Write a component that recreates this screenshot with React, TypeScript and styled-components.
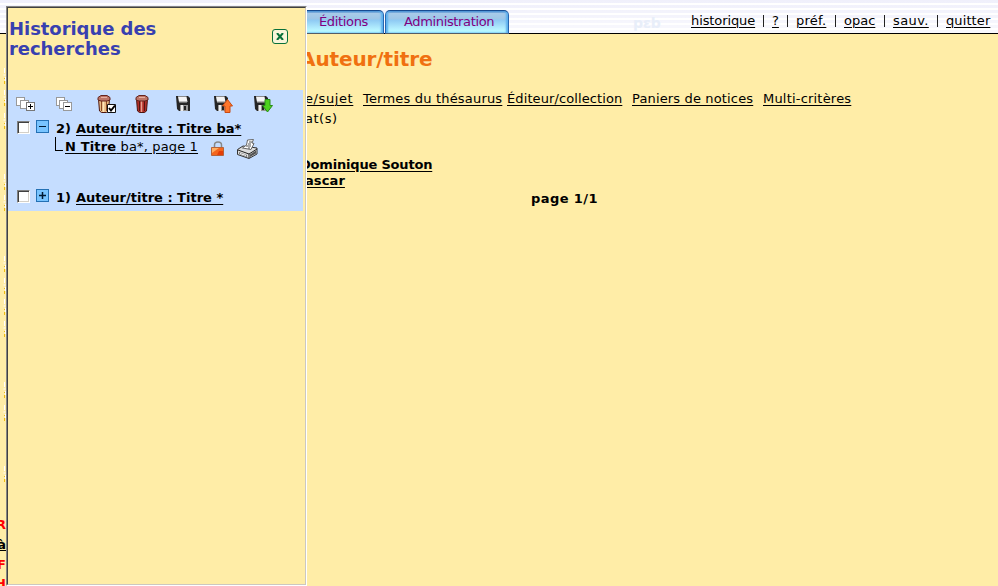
import React from "react";
import styled, { createGlobalStyle } from "styled-components";

const GlobalStyle = createGlobalStyle`
  html, body { margin: 0; height: 586px; overflow: hidden; }
  body { background: #ffeda7; color: #000; font: 13px/16px "DejaVu Sans", Verdana, sans-serif; }
`;

const Page = styled.div`
  position: relative;
  width: 998px;
  height: 586px;
  overflow: hidden;
`;
const Header = styled.header`
  box-sizing: border-box;
  display: flex;
  align-items: flex-end;
  height: 34px;
  padding-left: 290px;
  border-bottom: 1px solid #000;
  background: linear-gradient(#ffffff20, #ffffffa0), repeating-linear-gradient(#eeeefb 0 3px, #fff 3px 5px);
`;
const Tab = styled.div<{ $w: number; $pad: number }>`
  box-sizing: border-box;
  width: ${(p) => p.$w}px;
  height: 24px;
  margin-right: 1px;
  margin-bottom: -1px;
  padding: 3px 0 0 ${(p) => p.$pad}px;
  color: #800080;
  letter-spacing: -0.35px;
  white-space: nowrap;
  border: 1px solid #2766b0;
  border-top: 1px solid #174b91;
  border-bottom: 1px solid #555d66;
  border-radius: 5px 5px 0 0;
  background: linear-gradient(#4f86c4 0 1px, #a9cbe9 2px, #9dc6e7 8px, #8ec9f3 9px, #b5f1ff 18px, #baffff 22px);
  box-shadow: inset 2px 0 2px #5cb0ee, inset -2px 0 2px #5cb0ee;
`;
const Mark = styled.span<{ $ml: number }>`
  width: 28px;
  margin-left: ${(p) => p.$ml}px;
  font: bold 14px/20px "DejaVu Sans", sans-serif;
  color: #e8eef9;
`;
const UserLinks = styled.nav`
  display: flex;
  align-self: flex-start;
  padding-top: 13px;
  margin-left: 30px;
`;
const Fit = styled.span<{ $w: number; $ls?: number; $ml?: number; $line?: boolean; $bold?: boolean }>`
  display: block;
  flex: none;
  width: ${(p) => p.$w}px;
  margin-left: ${(p) => p.$ml ?? 0}px;
  letter-spacing: ${(p) => p.$ls ?? 0}px;
  white-space: nowrap;
  font-weight: ${(p) => (p.$bold ? "bold" : "normal")};
  text-decoration: ${(p) => (p.$line ? "underline" : "none")};
  text-underline-offset: 2px;
  text-decoration-thickness: 1px;
`;
const Pipe = styled.i`
  width: 1px;
  height: 12px;
  margin: 2px 8px 0;
  background: #222;
`;
const Results = styled.main`
  padding: 13px 0 0 300px;
`;
const Title = styled.h1`
  margin: 0;
  font: bold 20px/24px "DejaVu Sans", sans-serif;
  letter-spacing: -0.1px;
  color: #f07010;
`;
const Row = styled.div<{ $mt?: number; $pl?: number }>`
  display: flex;
  height: 16px;
  margin-top: ${(p) => p.$mt ?? 0}px;
  padding-left: ${(p) => p.$pl ?? 0}px;
`;
const Backdrop = styled.div`
  position: absolute;
  left: -6px;
  top: 517px;
  width: 12px;
  text-align: right;
`;
const Flecks = styled.svg`
  position: absolute;
  left: 2px;
  top: 60px;
`;
const Clip = styled.div<{ $c: string; $h: number; $line?: boolean }>`
  height: ${(p) => p.$h}px;
  font-weight: bold;
  color: ${(p) => p.$c};
  text-decoration: ${(p) => (p.$line ? "underline" : "none")};
`;
const Panel = styled.aside`
  position: absolute;
  box-sizing: border-box;
  left: 6px;
  top: 6px;
  width: 301px;
  height: 580px;
  border: 1px solid;
  border-color: #858585 #fff #fff #858585;
`;
const PanelBody = styled.div`
  box-sizing: border-box;
  height: 578px;
  border: 1px solid;
  border-color: #404040 #ccc8c0 #ccc8c0 #404040;
  background: #ffeda7;
`;
const PanelHead = styled.div`
  display: flex;
  justify-content: space-between;
  height: 71px;
  padding: 11px 17px 0 1px;
`;
const PanelTitle = styled.h2`
  width: 190px;
  margin: 0;
  font: bold 18px/20px "DejaVu Sans", sans-serif;
  letter-spacing: -0.05px;
  color: #3840b0;
`;
const Close = styled.button`
  display: flex;
  box-sizing: border-box;
  width: 16px;
  height: 15px;
  margin-top: 10px;
  padding: 3px;
  border: 1px solid #087038;
  border-radius: 3px;
  background: #f8f5d8;
`;
const History = styled.section`
  width: 295px;
  height: 121px;
  margin-top: 0;
  background: #c5ddff;
`;
const Tools = styled.div`
  display: flex;
  height: 30px;
`;
const Tool = styled.span<{ $ml: number; $mt?: number }>`
  flex: none;
  width: 22px;
  height: 22px;
  margin: ${(p) => p.$mt ?? 4}px 0 0 ${(p) => p.$ml}px;
  svg { display: block; }
`;
const Box = styled.span`
  box-sizing: border-box;
  width: 13px;
  height: 13px;
  margin: 1px 6px 0 9px;
  border: 1px solid;
  border-color: #808080 #fff #fff #808080;
  background: #fff;
  box-shadow: inset 1px 1px #404040, inset -1px -1px #d4d0c8;
`;
const Toggle = styled.span`
  box-sizing: border-box;
  width: 13px;
  height: 13px;
  margin-right: 7px;
  border: 1px solid #2471b5;
  background: #78c4ff;
  svg { display: block; }
`;
const Branch = styled.i`
  box-sizing: border-box;
  width: 8px;
  height: 14px;
  margin: -1px 0 0 47px;
  border: solid #000;
  border-width: 0 0 1px 1px;
`;
const Entry = styled(Row)`
  ${Fit} { margin-top: 1px; }
`;

const Sign = ({ plus }: { plus?: boolean }) => (
  <Toggle><svg width="11" height="11"><path d={plus ? "M2 5.5h7M5.5 2v7" : "M2 5.5h7"} stroke="#001a33" strokeWidth={plus ? 1.5 : 1} /></svg></Toggle>
);
const Stack = ({ plus }: { plus?: boolean }) => (
  <svg width="22" height="22" fill="#fff" stroke="#999" shapeRendering="crispEdges">
    <path d="M.5 3.500h8v8h-8z" />
    <path d={plus ? "M4.500 6.500h8v8h-8z" : "M3.500 6.500h8v8h-8z"} />
    {plus
      ? <path d="M10.5 8.500h8v8h-8z" stroke="#777" />
      : <path d="M7.500 8.500h8v8h-8z" />}
    <path d={plus ? "M12 12.500h5M14.500 10v5" : "M9 12.500h5"} stroke="#000" />
  </svg>
);
const Bin = ({ check }: { check?: boolean }) => (
  <svg width="22" height="22">
    <path d="M1.500 5h11l-1 12-2 1.500h-5L2.500 17z" fill={check ? "#e7b983" : "#b02e28"} stroke="#4c150f" />
    <path d="M4.500 7v10M9.500 7v10" stroke={check ? "#8d4a25" : "#551411"} />
    <path d="M6.500 7v11" stroke={check ? "#ffe4b8" : "#e9a08f"} strokeWidth="1.500" />
    <path d="M1 3.500l3-2h6l3 2V6l-3 1H4L1 6z" fill="#bd7568" stroke="#66251e" />
    <path d="M4 3.500h6" stroke="#e6aea0" />
    {check && <g><path d="M10.500 10.500h8v8h-8z" fill="#fff" stroke="#111" /><path d="M12 14l2 2.500 4-5" fill="none" stroke="#000" strokeWidth="2" /></g>}
  </svg>
);
const Disk = ({ arrow }: { arrow?: "up" | "down" }) => (
  <svg width="22" height="22">
    <path d="M1 2h12l2 2v13H4l-2-2z" fill="#252525" />
    <path d="M3 2.500h8.500l1 5.500H4z" fill="#f4f4f4" />
    <path d="M4 7h8v1.500H4z" fill="#bbb" />
    <path d="M5 11h8v6H5z" fill="#999" />
    <path d="M9 12h2v4H9z" fill="#222" />
    <path d="M6 11h2v6H6z" fill="#eee" />
    {arrow === "up" && <path d="M14.500 5.500l5 6.500h-2.500v6.500h-5V12H9.500z" fill="#ff762a" stroke="#c84b12" />}
    {arrow === "down" && <path d="M12 5.500h5v6h2.500l-5 6.500-5-6.500H12z" fill="#4dd31e" stroke="#2a8e1a" />}
  </svg>
);
const Lock = () => (
  <svg width="14" height="16">
    <path d="M3.500 7V4q0-3 3.500-3t3.500 3v3" fill="none" stroke="#888" strokeWidth="1.500" />
    <path d="M.5 6.500h12v8H.5z" fill="#f4651d" stroke="#b5633a" />
    <path d="M1 7h7l-7 5z" fill="#ffad62" /><path d="M8 10h4v4H6z" fill="#e33d08" />
  </svg>
);
const Printer = () => (
  <svg width="22" height="22">
    <path d="M.5 10.500L6 7l14 2v6l-8 4.500-11.500-4z" fill="#ddd" stroke="#333" />
    <path d="M5.500 9l4-3 1-5 6-.5L15 4l2 .5-3 6z" fill="#fff" stroke="#666" />
    <path d="M12 3h3M11 5h3M9 7h5M11 9h2" stroke="#555" />
    <path d="M1 11l11 4 8-5M12 15v4" fill="none" stroke="#222" />
    <path d="M2 13l8 3v2l-8-3z" fill="#777" /><path d="M3 14.500l6 2" stroke="#fff" />
    <path d="M13 15.500l6-4v3L13 18z" fill="#555" />
  </svg>
);

const userLinks: [string, number, number][] = [["historique", 64, -0.1], ["?", 7, 0], ["préf.", 31, 0.25], ["opac", 32, 0], ["sauv.", 36, 0.4], ["quitter", 44, 0.1]];
const fleckRows = [20, 42, 65, 126, 147, 208, 230, 251, 273, 334, 357, 418];

export default function App() {
  return (
    <Page>
      <GlobalStyle />
      <Header>
        <Tab $w={94} $pad={28}>Éditions</Tab>
        <Tab $w={124} $pad={18}>Administration</Tab>
        <Mark $ml={123}>pεb</Mark>
        <UserLinks>
          {userLinks.map(([t, w, ls], i) => (
            <React.Fragment key={t}>
              {i > 0 && <Pipe />}
              <Fit $w={w} $ls={ls} $line>{t}</Fit>
            </React.Fragment>
          ))}
        </UserLinks>
      </Header>
      <Results>
        <Title>Auteur/titre</Title>
        <Row $mt={20} $pl={5}>
          <Fit $w={48} $ls={0.6} $line>e/sujet</Fit>
          <Fit $w={139} $ml={10} $ls={0.19} $line>Termes du thésaurus</Fit>
          <Fit $w={115} $ml={5} $ls={0.1} $line>Éditeur/collection</Fit>
          <Fit $w={121} $ml={10} $ls={0.15} $line>Paniers de notices</Fit>
          <Fit $w={88} $ml={10} $ls={0.2} $line>Multi-critères</Fit>
        </Row>
        <Row $mt={4} $pl={5}><Fit $w={40} $ls={0.5}>at(s)</Fit></Row>
        <Row $mt={30}><Fit $w={132} $ls={-0.19} $bold $line>Dominique Souton</Fit></Row>
        <Row $pl={5}><Fit $w={41} $ls={0.1} $bold $line>ascar</Fit></Row>
        <Row $mt={2} $pl={231}><Fit $w={67} $ls={0.42} $bold>page 1/1</Fit></Row>
      </Results>
      <Flecks width="4" height="430">
        {fleckRows.map((y) => (
          <g key={y}>
            <path d={`M2.500 ${y - 12}v5M1.500 ${y - 5}h2M3.500 ${y - 3}v4`} stroke="#fff" fill="none" />
            <path d={`M2.500 ${y - 2}v1M2.500 ${y + 1}v3`} stroke="#eebb10" />
          </g>
        ))}
      </Flecks>
      <Backdrop>
        <Clip $c="#f00" $h={20}>R</Clip>
        <Clip $c="#000" $h={20} $line>à</Clip>
        <Clip $c="#f00" $h={19}>F</Clip>
        <Clip $c="#f00" $h={10}>H</Clip>
      </Backdrop>
      <Panel>
        <PanelBody>
          <PanelHead>
            <PanelTitle>Historique des recherches</PanelTitle>
            <Close aria-label="Fermer"><svg width="8" height="7"><path d="M1 0l6 7M7 0L1 7" stroke="#087038" strokeWidth="2" /></svg></Close>
          </PanelHead>
          <History>
            <Tools>
              <Tool $ml={8}><Stack plus /></Tool>
              <Tool $ml={18}><Stack /></Tool>
              <Tool $ml={19}><Bin check /></Tool>
              <Tool $ml={16}><Bin /></Tool>
              <Tool $ml={18}><Disk /></Tool>
              <Tool $ml={16}><Disk arrow="up" /></Tool>
              <Tool $ml={18}><Disk arrow="down" /></Tool>
            </Tools>
            <Entry>
              <Box /><Sign />
              <Fit $w={20} $bold>2)</Fit>
              <Fit $w={166} $bold $line>Auteur/titre : Titre ba*</Fit>
            </Entry>
            <Entry $mt={2}>
              <Branch />
              <Fit $w={134} $ml={2} $ls={0.15} $line><b>N Titre</b> ba*, page 1</Fit>
              <Tool $ml={12} $mt={3}><Lock /></Tool>
              <Tool $ml={4} $mt={1}><Printer /></Tool>
            </Entry>
            <Entry $mt={35}>
              <Box /><Sign plus />
              <Fit $w={20} $bold>1)</Fit>
              <Fit $w={148} $bold $line>Auteur/titre : Titre *</Fit>
            </Entry>
          </History>
        </PanelBody>
      </Panel>
    </Page>
  );
}
